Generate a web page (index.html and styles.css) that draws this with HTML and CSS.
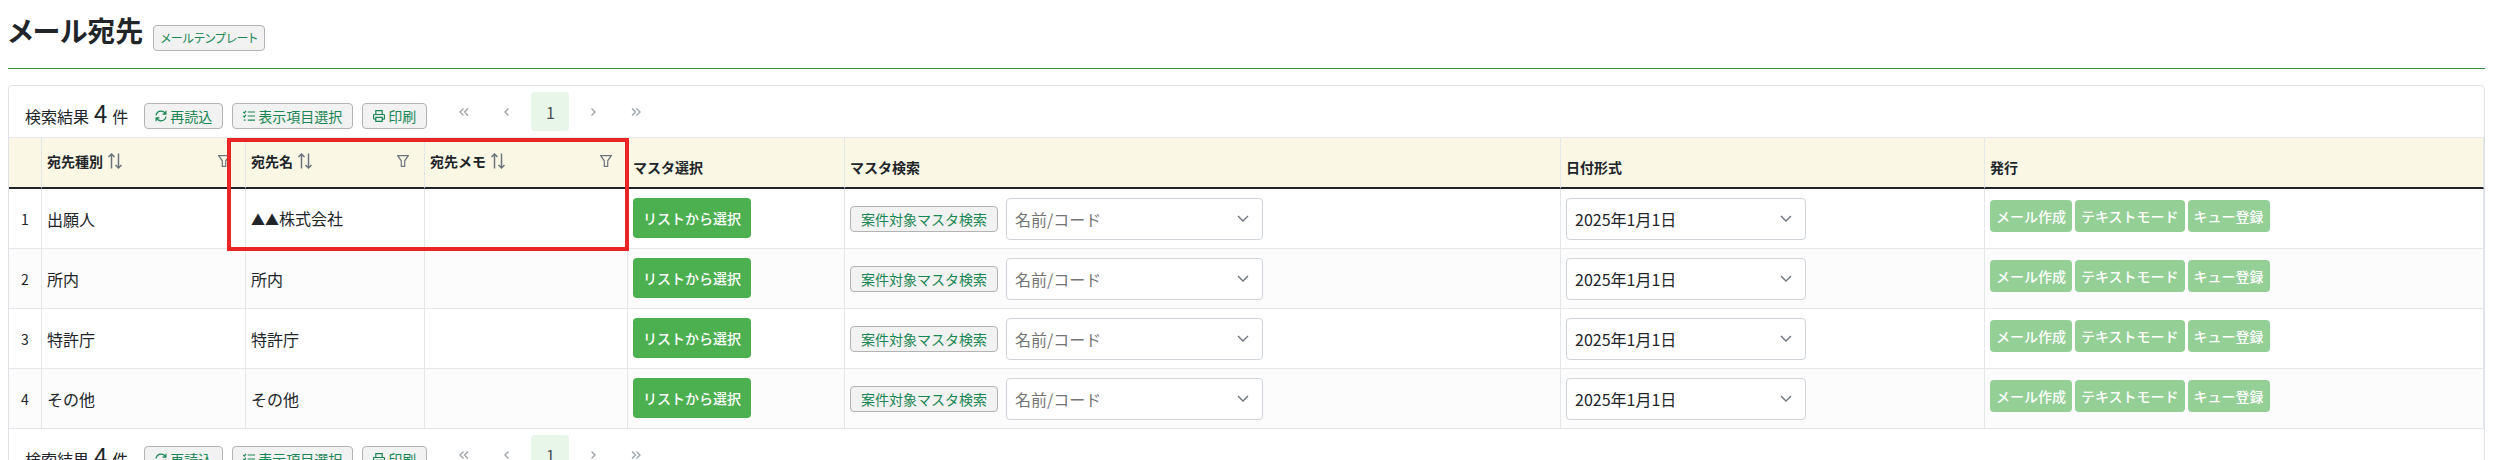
FILE: index.html
```html
<!DOCTYPE html>
<html lang="ja">
<head>
  <meta charset="UTF-8">
  <meta name="viewport" content="width=device-width, initial-scale=1.0">
  <title>メール宛先</title>
  <link rel="stylesheet" href="styles.css">
</head>
<body>
  <!-- icons -->
  <svg class="sprite" aria-hidden="true">
    <symbol id="i-sort" viewBox="0 0 16 16"><path stroke-width="1.500" d="M4.500 15.500V1M1.500 4l3-3 3 3M11.500 .5V15M8.500 12l3 3 3-3"/></symbol>
    <symbol id="i-filter" viewBox="0 0 12 12"><path stroke-width="1.200" d="M.7.700h10.600L7.700 5.800v5.500H4.300V5.800z"/></symbol>
    <symbol id="i-reload" viewBox="0 0 12 12"><path stroke-width="1.200" d="M1 5.500C1.500 2.700 3.700 1.200 6 1.200c2 0 3.600 1 4.500 2.800M10.900.800V4.200H7.500M11 6.500c-.5 2.800-2.700 4.300-5 4.300-2 0-3.600-1-4.500-2.800M1.100 11.200V7.800h3.400"/></symbol>
    <symbol id="i-list" viewBox="0 0 12 12"><path stroke-width="1.200" d="M.3 2l1 1L3 .8M.3 6l1 1L3 4.800M.8 10.200h1.700M4.800 2H12M4.800 6H12M4.800 10.200H12"/></symbol>
    <symbol id="i-print" viewBox="0 0 12 12"><path stroke-width="1.200" d="M2.800 4.500V.6h6.400v3.900M2.800 9.200H1.500a1 1 0 0 1-1-1V5.500a1 1 0 0 1 1-1h9a1 1 0 0 1 1 1v2.700a1 1 0 0 1-1 1H9.200M2.800 7.300h6.400v4.100H2.800z"/></symbol>
    <symbol id="i-first" viewBox="0 0 12 12"><path stroke-width="1.300" d="M5.500 2.500L2 6l3.500 3.500M10 2.500L6.500 6 10 9.500"/></symbol>
    <symbol id="i-prev" viewBox="0 0 12 12"><path stroke-width="1.300" d="M7.500 2.500L4 6l3.500 3.500"/></symbol>
    <symbol id="i-next" viewBox="0 0 12 12"><path stroke-width="1.300" d="M4.500 2.500L8 6 4.500 9.500"/></symbol>
    <symbol id="i-last" viewBox="0 0 12 12"><path stroke-width="1.300" d="M2 2.500L5.500 6 2 9.500M6.500 2.500L10 6 6.500 9.500"/></symbol>
    <symbol id="i-down" viewBox="0 0 12 12"><path stroke-width="1.400" d="M1 3l5 5 5-5"/></symbol>
  </svg>

  <header class="page-header">
    <h1>メール宛先</h1>
    <button type="button" class="btn-sub btn-template">メールテンプレート</button>
  </header>

  <main class="panel">
    <div class="toolbar">
      <div class="tools">
        <span class="count">検索結果 <span class="count-num">4</span> 件</span>
        <button type="button" class="btn-sub"><svg class="icon"><use href="#i-reload"/></svg>再読込</button>
        <button type="button" class="btn-sub"><svg class="icon"><use href="#i-list"/></svg>表示項目選択</button>
        <button type="button" class="btn-sub"><svg class="icon"><use href="#i-print"/></svg>印刷</button>
      </div>
      <nav class="pager">
        <button type="button" aria-label="最初"><svg class="icon"><use href="#i-first"/></svg></button>
        <button type="button" aria-label="前へ"><svg class="icon"><use href="#i-prev"/></svg></button>
        <button type="button" class="current">1</button>
        <button type="button" aria-label="次へ"><svg class="icon"><use href="#i-next"/></svg></button>
        <button type="button" aria-label="最後"><svg class="icon"><use href="#i-last"/></svg></button>
      </nav>
    </div>

    <div class="table-wrap">
      <table class="grid">
        <colgroup>
          <col class="c-no"><col class="c-type"><col class="c-name"><col class="c-memo">
          <col class="c-select"><col class="c-search"><col class="c-date"><col>
        </colgroup>
        <thead>
          <tr>
            <th></th>
            <th><div class="sortable">宛先種別<svg class="icon-sort"><use href="#i-sort"/></svg><svg class="icon icon-filter"><use href="#i-filter"/></svg></div></th>
            <th><div class="sortable">宛先名<svg class="icon-sort"><use href="#i-sort"/></svg><svg class="icon icon-filter"><use href="#i-filter"/></svg></div></th>
            <th><div class="sortable">宛先メモ<svg class="icon-sort"><use href="#i-sort"/></svg><svg class="icon icon-filter"><use href="#i-filter"/></svg></div></th>
            <th>マスタ選択</th>
            <th>マスタ検索</th>
            <th>日付形式</th>
            <th>発行</th>
          </tr>
        </thead>
        <tbody>
          <tr>
            <td class="no">1</td>
            <td>出願人</td>
            <td><span class="mark">▲▲</span>株式会社</td>
            <td></td>
            <td><button type="button" class="btn-main">リストから選択</button></td>
            <td><div class="search"><button type="button" class="btn-sub">案件対象マスタ検索</button><div class="field field-name"><input type="text" aria-label="名前/コード" placeholder="名前/コード"><svg class="icon"><use href="#i-down"/></svg></div></div></td>
            <td><div class="field field-date"><select aria-label="日付形式"><option>2025年1月1日</option></select><svg class="icon"><use href="#i-down"/></svg></div></td>
            <td><div class="actions"><button type="button" disabled>メール作成</button><button type="button" disabled>テキストモード</button><button type="button" disabled>キュー登録</button></div></td>
          </tr>
          <tr>
            <td class="no">2</td>
            <td>所内</td>
            <td>所内</td>
            <td></td>
            <td><button type="button" class="btn-main">リストから選択</button></td>
            <td><div class="search"><button type="button" class="btn-sub">案件対象マスタ検索</button><div class="field field-name"><input type="text" aria-label="名前/コード" placeholder="名前/コード"><svg class="icon"><use href="#i-down"/></svg></div></div></td>
            <td><div class="field field-date"><select aria-label="日付形式"><option>2025年1月1日</option></select><svg class="icon"><use href="#i-down"/></svg></div></td>
            <td><div class="actions"><button type="button" disabled>メール作成</button><button type="button" disabled>テキストモード</button><button type="button" disabled>キュー登録</button></div></td>
          </tr>
          <tr>
            <td class="no">3</td>
            <td>特許庁</td>
            <td>特許庁</td>
            <td></td>
            <td><button type="button" class="btn-main">リストから選択</button></td>
            <td><div class="search"><button type="button" class="btn-sub">案件対象マスタ検索</button><div class="field field-name"><input type="text" aria-label="名前/コード" placeholder="名前/コード"><svg class="icon"><use href="#i-down"/></svg></div></div></td>
            <td><div class="field field-date"><select aria-label="日付形式"><option>2025年1月1日</option></select><svg class="icon"><use href="#i-down"/></svg></div></td>
            <td><div class="actions"><button type="button" disabled>メール作成</button><button type="button" disabled>テキストモード</button><button type="button" disabled>キュー登録</button></div></td>
          </tr>
          <tr>
            <td class="no">4</td>
            <td>その他</td>
            <td>その他</td>
            <td></td>
            <td><button type="button" class="btn-main">リストから選択</button></td>
            <td><div class="search"><button type="button" class="btn-sub">案件対象マスタ検索</button><div class="field field-name"><input type="text" aria-label="名前/コード" placeholder="名前/コード"><svg class="icon"><use href="#i-down"/></svg></div></div></td>
            <td><div class="field field-date"><select aria-label="日付形式"><option>2025年1月1日</option></select><svg class="icon"><use href="#i-down"/></svg></div></td>
            <td><div class="actions"><button type="button" disabled>メール作成</button><button type="button" disabled>テキストモード</button><button type="button" disabled>キュー登録</button></div></td>
          </tr>
        </tbody>
      </table>
      <div class="highlight"></div>
    </div>

    <div class="toolbar">
      <div class="tools">
        <span class="count">検索結果 <span class="count-num">4</span> 件</span>
        <button type="button" class="btn-sub"><svg class="icon"><use href="#i-reload"/></svg>再読込</button>
        <button type="button" class="btn-sub"><svg class="icon"><use href="#i-list"/></svg>表示項目選択</button>
        <button type="button" class="btn-sub"><svg class="icon"><use href="#i-print"/></svg>印刷</button>
      </div>
      <nav class="pager">
        <button type="button" aria-label="最初"><svg class="icon"><use href="#i-first"/></svg></button>
        <button type="button" aria-label="前へ"><svg class="icon"><use href="#i-prev"/></svg></button>
        <button type="button" class="current">1</button>
        <button type="button" aria-label="次へ"><svg class="icon"><use href="#i-next"/></svg></button>
        <button type="button" aria-label="最後"><svg class="icon"><use href="#i-last"/></svg></button>
      </nav>
    </div>
  </main>
</body>
</html>
```

FILE: styles.css
```css
* {
  box-sizing: border-box;
}

body {
  margin: 0 8px;
  background-color: #fff;
  color: #212529;
  font-family: "Noto Sans CJK JP", sans-serif;
  font-size: 16px;
  line-height: 24px;
}

button,
input,
select {
  font-family: inherit;
}

button {
  cursor: pointer;
}

svg {
  flex: none;
  fill: none;
  stroke: currentColor;
}

.sprite {
  display: none;
}

.icon {
  width: 12px;
  height: 12px;
}

/* page header */
.page-header {
  display: flex;
  align-items: flex-end;
  gap: 10px;
  height: 69px;
  padding-bottom: 17px;
  margin-bottom: 16px;
  border-bottom: 1px solid #388e3c;
}

.page-header h1 {
  margin: 0;
  font-size: 28px;
  font-weight: 700;
  line-height: 42px;
  font-feature-settings: "palt";
}

/* buttons */
.btn-sub {
  display: inline-flex;
  align-items: center;
  gap: 3px;
  height: 26px;
  padding: 0 10px;
  border: 1px solid #b3b3b3;
  border-radius: 4px;
  background-color: #f2f2f2;
  color: #198754;
  font-size: 14px;
  line-height: 20px;
  white-space: nowrap;
}

.btn-template {
  padding: 0 6px;
  font-size: 12px;
  font-feature-settings: "palt";
}

.btn-main {
  display: block;
  height: 40px;
  padding: 0 10px;
  margin-bottom: 2px;
  border: none;
  border-radius: 4px;
  background-color: #4caf50;
  color: #fff;
  font-size: 14px;
  font-weight: 500;
  white-space: nowrap;
}

/* panel */
.panel {
  border: 1px solid #dee2e6;
  border-radius: 4px;
}

.toolbar {
  display: flex;
  align-items: flex-start;
  gap: 18px;
  padding: 6px 16px;
}

.tools {
  display: flex;
  align-items: center;
  gap: 9px;
  padding-top: 11px;
}

.count {
  display: flex;
  align-items: baseline;
  gap: 5px;
  height: 26px;
  margin-right: 7px;
  line-height: 20px;
}

.count-num {
  font-size: 24px;
}

.pager {
  display: flex;
  gap: 5px;
}

.pager button {
  display: flex;
  align-items: center;
  justify-content: center;
  width: 38px;
  height: 39px;
  padding: 0;
  border: none;
  border-radius: 4px;
  background-color: transparent;
  color: #9aa1a8;
  font-size: 16px;
}

.pager .current {
  background-color: #e8f5e9;
  color: #495057;
}

/* table */
.table-wrap {
  position: relative;
}

.grid {
  width: 100%;
  border-collapse: separate;
  border-spacing: 0;
  border-top: 1px solid #e4e7ea;
  table-layout: fixed;
}

.c-no { width: 33px; }
.c-type { width: 204px; }
.c-name { width: 179px; }
.c-memo { width: 203px; }
.c-select { width: 217px; }
.c-search { width: 716px; }
.c-date { width: 424px; }

.grid th {
  height: 51px;
  padding: 8px 5px 0;
  border-right: 1px solid #e4e7ea;
  border-bottom: 2px solid #212529;
  background-color: #faf7e4;
  font-size: 14px;
  font-weight: 700;
  line-height: 20px;
  text-align: left;
}

.sortable {
  display: flex;
  align-items: center;
  padding-right: 10px;
  margin-bottom: 12px;
}

.icon-sort {
  width: 16px;
  height: 16px;
  margin-left: 4px;
  color: #6c757d;
}

.icon-filter {
  margin-left: auto;
  color: #6c757d;
}

.grid td {
  height: 60px;
  padding: 0 5px;
  border-right: 1px solid #e4e7ea;
  border-bottom: 1px solid #e4e7ea;
}

.grid tbody tr:nth-child(even) {
  background-color: #fcfcfc;
}

.grid .no {
  font-size: 14px;
  text-align: center;
}

.mark {
  font-size: 14px;
}

.search {
  display: flex;
  align-items: center;
  gap: 8px;
}

.field {
  display: flex;
  align-items: center;
  height: 42px;
  padding-right: 13px;
  border: 1px solid #ced4da;
  border-radius: 4px;
  background-color: #fff;
  color: #6c757d;
}

.field-name {
  width: 257px;
}

.field-date {
  width: 240px;
}

.field input,
.field select {
  flex: 1;
  min-width: 0;
  height: 40px;
  padding: 0 8px;
  border: none;
  outline: none;
  background: none;
  color: #212529;
  font-size: 16px;
  appearance: none;
}

.field input::placeholder {
  color: #757575;
}

.actions {
  display: flex;
  gap: 3px;
  padding-bottom: 6px;
}

.actions button {
  height: 32px;
  padding: 0 6px;
  border: none;
  border-radius: 4px;
  background-color: #94cf96;
  color: #fff;
  font-size: 14px;
  font-weight: 500;
  white-space: nowrap;
}

/* frame around the name and memo columns of the first row */
.highlight {
  position: absolute;
  top: 1px;
  left: 218px;
  width: 402px;
  height: 113px;
  border: 4px solid #e92424;
  pointer-events: none;
}
```
